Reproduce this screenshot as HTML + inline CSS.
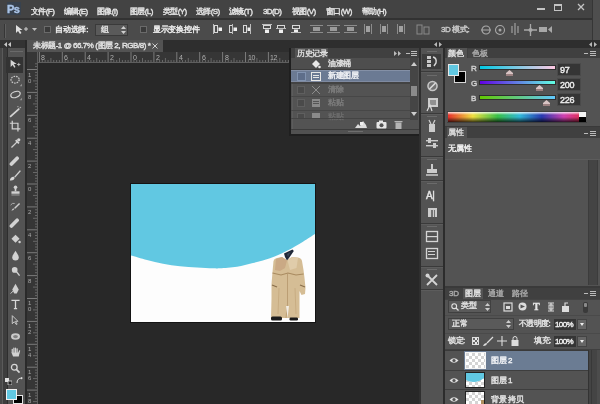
<!DOCTYPE html>
<html><head><meta charset="utf-8">
<style>
*{margin:0;padding:0;box-sizing:border-box}
html,body{-webkit-font-smoothing:antialiased;width:600px;height:404px;overflow:hidden;background:#282828;font-family:"Liberation Sans",sans-serif;color:#d6d6d6;position:relative}
.a{position:absolute}
.t{position:absolute;white-space:nowrap;-webkit-text-stroke:0.4px currentColor}
</style></head><body><div id="w" style="position:absolute;left:0;top:0;width:600px;height:404px;overflow:hidden;will-change:transform">
<div class="a" style="left:0px;top:0px;width:600px;height:19px;background:#434343;"></div>
<div class="a" style="left:7px;top:2px;width:14px;height:13px;background:#38424e;"></div>
<div class="t" style="left:7px;top:3px;font-size:11px;line-height:13px;color:#a9c3e6;font-weight:bold;line-height:12px;letter-spacing:-0.6px">Ps</div>
<div class="t" style="left:31px;top:7px;font-size:8px;line-height:10px;color:#e2e2e2;letter-spacing:-0.6px">文件(F)</div>
<div class="t" style="left:64px;top:7px;font-size:8px;line-height:10px;color:#e2e2e2;letter-spacing:-0.6px">编辑(E)</div>
<div class="t" style="left:97px;top:7px;font-size:8px;line-height:10px;color:#e2e2e2;letter-spacing:-0.6px">图像(I)</div>
<div class="t" style="left:130px;top:7px;font-size:8px;line-height:10px;color:#e2e2e2;letter-spacing:-0.6px">图层(L)</div>
<div class="t" style="left:163px;top:7px;font-size:8px;line-height:10px;color:#e2e2e2;letter-spacing:-0.6px">类型(Y)</div>
<div class="t" style="left:196px;top:7px;font-size:8px;line-height:10px;color:#e2e2e2;letter-spacing:-0.6px">选择(S)</div>
<div class="t" style="left:229px;top:7px;font-size:8px;line-height:10px;color:#e2e2e2;letter-spacing:-0.6px">滤镜(T)</div>
<div class="t" style="left:263px;top:7px;font-size:8px;line-height:10px;color:#e2e2e2;letter-spacing:-0.6px">3D(D)</div>
<div class="t" style="left:292px;top:7px;font-size:8px;line-height:10px;color:#e2e2e2;letter-spacing:-0.6px">视图(V)</div>
<div class="t" style="left:326px;top:7px;font-size:8px;line-height:10px;color:#e2e2e2;letter-spacing:-0.6px">窗口(W)</div>
<div class="t" style="left:362px;top:7px;font-size:8px;line-height:10px;color:#e2e2e2;letter-spacing:-0.6px">帮助(H)</div>
<div class="a" style="left:537px;top:8px;width:8px;height:2px;background:#c4c4c4;"></div>
<div class="a" style="left:554px;top:4px;width:8px;height:7px;border:1px solid #c4c4c4;border-top-width:2px"></div>
<svg class="a" style="left:577px;top:3px;" width="8" height="8" viewBox="0 0 8 8"><path d="M1 1L7 7M7 1L1 7" stroke="#c4c4c4" stroke-width="1.3"/></svg>
<div class="a" style="left:0px;top:18px;width:600px;height:2px;background:#323232;"></div>
<div class="a" style="left:0px;top:20px;width:600px;height:20px;background:#4b4b4b;"></div>
<div class="a" style="left:4px;top:24px;width:1px;height:14px;background:#363636;"></div>
<div class="a" style="left:5px;top:24px;width:1px;height:14px;background:#5e5e5e;"></div>
<svg class="a" style="left:15px;top:24px;" width="14" height="11" viewBox="0 0 14 11"><path d="M1 1L1 9L3 7L5 10L6.5 9L4.5 6L7.5 6Z" fill="#e0e0e0"/><path d="M9 5L13 5M11 3L11 7" stroke="#cfcfcf" stroke-width="1"/></svg>
<svg class="a" style="left:32px;top:28px;" width="5" height="3" viewBox="0 0 5 3"><path d="M0 0L5 0L2.5 3Z" fill="#bdbdbd"/></svg>
<div class="a" style="left:44px;top:26px;width:7px;height:7px;background:#3a3a3a;border:1px solid #6a6a6a"></div>
<div class="t" style="left:55px;top:25px;font-size:8px;line-height:10px;color:#eeeeee;letter-spacing:-0.2px">自动选择:</div>
<div class="a" style="left:95px;top:24px;width:33px;height:12px;background:#5a5a5a;border:1px solid #3a3a3a"></div>
<div class="t" style="left:101px;top:25px;font-size:8px;line-height:10px;color:#e0e0e0;">组</div>
<svg class="a" style="left:121px;top:26px;" width="5" height="8" viewBox="0 0 5 8"><path d="M0 3L2.5 0L5 3ZM0 5L5 5L2.5 8Z" fill="#cfcfcf"/></svg>
<div class="a" style="left:140px;top:26px;width:7px;height:7px;background:#3a3a3a;border:1px solid #6a6a6a"></div>
<div class="t" style="left:153px;top:25px;font-size:8px;line-height:10px;color:#eeeeee;letter-spacing:-0.3px">显示变换控件</div>
<svg class="a" style="left:213px;top:24px;" width="10" height="10" viewBox="0 0 10 10"><rect x="1.5" y="1.5" width="3" height="7" fill="none" stroke="#d8d8d8" stroke-width="1"/><rect x="5.5" y="3.5" width="3.5" height="3.5" fill="#f0f0f0"/><rect x="0.0" y="0" width="1" height="10" fill="#bdbdbd"/></svg>
<svg class="a" style="left:228px;top:24px;" width="10" height="10" viewBox="0 0 10 10"><rect x="1.5" y="1.5" width="3" height="7" fill="none" stroke="#d8d8d8" stroke-width="1"/><rect x="5.5" y="3.5" width="3.5" height="3.5" fill="#f0f0f0"/><rect x="4.0" y="0" width="1" height="10" fill="#bdbdbd"/></svg>
<svg class="a" style="left:242px;top:24px;" width="10" height="10" viewBox="0 0 10 10"><rect x="1.5" y="1.5" width="3" height="7" fill="none" stroke="#d8d8d8" stroke-width="1"/><rect x="5.5" y="3.5" width="3.5" height="3.5" fill="#f0f0f0"/><rect x="8.0" y="0" width="1" height="10" fill="#bdbdbd"/></svg>
<svg class="a" style="left:262px;top:24px;" width="10" height="10" viewBox="0 0 10 10"><rect x="1.5" y="1.5" width="7" height="3" fill="none" stroke="#d8d8d8" stroke-width="1"/><rect x="3" y="5.5" width="4" height="3.5" fill="#f0f0f0"/><rect x="0" y="0.0" width="10" height="1" fill="#bdbdbd"/></svg>
<svg class="a" style="left:276px;top:24px;" width="10" height="10" viewBox="0 0 10 10"><rect x="1.5" y="1.5" width="7" height="3" fill="none" stroke="#d8d8d8" stroke-width="1"/><rect x="3" y="5.5" width="4" height="3.5" fill="#f0f0f0"/><rect x="0" y="4.0" width="10" height="1" fill="#bdbdbd"/></svg>
<svg class="a" style="left:291px;top:24px;" width="10" height="10" viewBox="0 0 10 10"><rect x="1.5" y="1.5" width="7" height="3" fill="none" stroke="#d8d8d8" stroke-width="1"/><rect x="3" y="5.5" width="4" height="3.5" fill="#f0f0f0"/><rect x="0" y="8.0" width="10" height="1" fill="#bdbdbd"/></svg>
<svg class="a" style="left:310px;top:24px;" width="13" height="10" viewBox="0 0 13 10"><rect x="0" y="1" width="13" height="1" fill="#8c8c8c"/><rect x="0" y="8" width="13" height="1" fill="#8c8c8c"/><rect x="3" y="3" width="7" height="4" fill="#9a9a9a"/></svg>
<svg class="a" style="left:327px;top:24px;" width="13" height="10" viewBox="0 0 13 10"><rect x="0" y="1" width="13" height="1" fill="#8c8c8c"/><rect x="0" y="8" width="13" height="1" fill="#8c8c8c"/><rect x="3" y="3" width="7" height="4" fill="#9a9a9a"/></svg>
<svg class="a" style="left:344px;top:24px;" width="13" height="10" viewBox="0 0 13 10"><rect x="0" y="1" width="13" height="1" fill="#8c8c8c"/><rect x="0" y="8" width="13" height="1" fill="#8c8c8c"/><rect x="3" y="3" width="7" height="4" fill="#9a9a9a"/></svg>
<svg class="a" style="left:363px;top:23px;" width="10" height="12" viewBox="0 0 10 12"><rect x="1" y="1" width="1" height="10" fill="#8c8c8c"/><rect x="8" y="1" width="1" height="10" fill="#8c8c8c"/><rect x="3" y="3" width="4" height="6" fill="#a0a0a0"/></svg>
<svg class="a" style="left:379px;top:23px;" width="10" height="12" viewBox="0 0 10 12"><rect x="1" y="1" width="1" height="10" fill="#8c8c8c"/><rect x="8" y="1" width="1" height="10" fill="#8c8c8c"/><rect x="3" y="3" width="4" height="6" fill="#a0a0a0"/></svg>
<svg class="a" style="left:396px;top:23px;" width="10" height="12" viewBox="0 0 10 12"><rect x="1" y="1" width="1" height="10" fill="#8c8c8c"/><rect x="8" y="1" width="1" height="10" fill="#8c8c8c"/><rect x="3" y="3" width="4" height="6" fill="#a0a0a0"/></svg>
<svg class="a" style="left:416px;top:24px;" width="14" height="11" viewBox="0 0 14 11"><rect x="1" y="1" width="5" height="9" fill="none" stroke="#8a8a8a"/><rect x="8" y="3" width="5" height="7" fill="none" stroke="#8a8a8a"/></svg>
<div class="t" style="left:441px;top:25px;font-size:8px;line-height:10px;color:#c8c8c8;letter-spacing:-0.4px">3D 模式:</div>
<svg class="a" style="left:480px;top:24px;" width="13" height="11" viewBox="0 0 13 11"><circle cx="6" cy="6" r="4" fill="none" stroke="#a8a8a8" stroke-width="1.2"/><path d="M1 6L11 6" stroke="#a8a8a8"/></svg>
<svg class="a" style="left:494px;top:24px;" width="12" height="12" viewBox="0 0 12 12"><circle cx="6" cy="6" r="4.5" fill="none" stroke="#a8a8a8" stroke-width="1.1"/><circle cx="6" cy="6" r="1.5" fill="#a8a8a8"/></svg>
<svg class="a" style="left:509px;top:23px;" width="12" height="13" viewBox="0 0 12 13"><path d="M6 0L6 12M3 3L3 10M9 3L9 10" stroke="#a8a8a8" stroke-width="1.1"/></svg>
<svg class="a" style="left:524px;top:24px;" width="13" height="12" viewBox="0 0 13 12"><path d="M6.5 0L6.5 12M0 6L13 6" stroke="#a8a8a8" stroke-width="1.3"/><circle cx="6.5" cy="6" r="2" fill="#a8a8a8"/></svg>
<svg class="a" style="left:539px;top:25px;" width="14" height="9" viewBox="0 0 14 9"><rect x="0" y="2" width="8" height="5" fill="#a8a8a8"/><path d="M9 4.5L13 1L13 8Z" fill="#a8a8a8"/></svg>
<div class="a" style="left:592px;top:0px;width:1px;height:40px;background:#363636;"></div>
<div class="a" style="left:593px;top:0px;width:7px;height:40px;background:#4e4e4e;"></div>
<div class="a" style="left:0px;top:40px;width:600px;height:12px;background:#2e2e2e;"></div>
<div class="a" style="left:0px;top:40px;width:26px;height:364px;background:#474747;"></div>
<div class="a" style="left:0px;top:40px;width:26px;height:8px;background:#333333;"></div>
<svg class="a" style="left:4px;top:42px;" width="7" height="5" viewBox="0 0 7 5"><path d="M3 0L0 2.5L3 5ZM7 0L4 2.5L7 5Z" fill="#c8c8c8"/></svg>
<div class="a" style="left:2px;top:48px;width:1px;height:356px;background:#5a5a5a;"></div>
<div class="a" style="left:3px;top:48px;width:4px;height:356px;background:#3d3d3d;"></div>
<div class="a" style="left:7px;top:48px;width:1px;height:356px;background:#2e2e2e;"></div>
<div class="a" style="left:8px;top:48px;width:17px;height:356px;background:#535353;"></div>
<div class="a" style="left:25px;top:40px;width:2px;height:364px;background:#2a2a2a;"></div>
<div class="a" style="left:10px;top:51px;width:13px;height:1px;background:#6a6a6a;"></div>
<div class="a" style="left:6px;top:57px;width:17px;height:16px;background:#333333;"></div>
<svg class="a" style="left:9px;top:58px;opacity:0.9" width="13" height="13" viewBox="0 0 16 16"><path d="M2 2L2 11L4.5 8.5L6.5 12L8 11L6 7.5L9.5 7.5Z" fill="#e6e6e6"/><path d="M10 8L14 8M12 6L12 10" stroke="#ddd" stroke-width="1"/></svg>
<svg class="a" style="left:9px;top:74px;opacity:0.9" width="13" height="13" viewBox="0 0 16 16"><ellipse cx="7.5" cy="7" rx="5" ry="4.2" fill="none" stroke="#d4d4d4" stroke-width="1.5" stroke-dasharray="2 1.2"/><path d="M13 15L16 12L16 15Z" fill="#999"/></svg>
<svg class="a" style="left:9px;top:88px;opacity:0.9" width="13" height="13" viewBox="0 0 16 16"><ellipse cx="8" cy="8" rx="6" ry="3.6" transform="rotate(-20 8 8)" fill="none" stroke="#e0e0e0" stroke-width="1.6"/><path d="M13 15L16 12L16 15Z" fill="#999"/></svg>
<svg class="a" style="left:9px;top:105px;opacity:0.9" width="13" height="13" viewBox="0 0 16 16"><path d="M2 14L12 5" stroke="#e0e0e0" stroke-width="2.2" stroke-linecap="round"/><circle cx="14" cy="3" r="1" fill="#bbb"/><circle cx="11" cy="2" r="0.8" fill="#bbb"/></svg>
<svg class="a" style="left:9px;top:120px;opacity:0.9" width="13" height="13" viewBox="0 0 16 16"><path d="M4 1L4 11L14 11M1 4L11 4L11 14" fill="none" stroke="#e0e0e0" stroke-width="1.5"/></svg>
<svg class="a" style="left:9px;top:137px;opacity:0.9" width="13" height="13" viewBox="0 0 16 16"><path d="M3 13L10 6" stroke="#dcdcdc" stroke-width="1.6"/><path d="M9 3L13 7L11.5 8.5L7.5 4.5Z" fill="#e2e2e2"/><circle cx="12" cy="3.5" r="2" fill="#e2e2e2"/></svg>
<svg class="a" style="left:9px;top:155px;opacity:0.9" width="13" height="13" viewBox="0 0 16 16"><path d="M3 11L10 4" stroke="#e0e0e0" stroke-width="4.5" stroke-linecap="round"/></svg>
<svg class="a" style="left:9px;top:169px;opacity:0.9" width="13" height="13" viewBox="0 0 16 16"><path d="M14 2L7 10" stroke="#e0e0e0" stroke-width="1.8"/><path d="M1 14Q2 9 6 9.5Q8 11 6 13Q4 14.5 1 14Z" fill="#e6e6e6"/></svg>
<svg class="a" style="left:9px;top:184px;opacity:0.9" width="13" height="13" viewBox="0 0 16 16"><circle cx="8" cy="4" r="2.2" fill="#e0e0e0"/><rect x="7" y="5" width="2" height="4" fill="#e0e0e0"/><rect x="3" y="9" width="10" height="3" fill="#e0e0e0"/><rect x="3" y="13" width="10" height="1" fill="#bbb"/></svg>
<svg class="a" style="left:9px;top:201px;opacity:0.9" width="13" height="13" viewBox="0 0 16 16"><path d="M13 3L7 9" stroke="#dcdcdc" stroke-width="1.8"/><path d="M3 12Q4 9 7 9Q6 12 3 12Z" fill="#e0e0e0"/><path d="M2 5Q4 2 7 3" stroke="#ccc" fill="none"/></svg>
<svg class="a" style="left:9px;top:217px;opacity:0.9" width="13" height="13" viewBox="0 0 16 16"><path d="M3 11L10 4" stroke="#e0e0e0" stroke-width="4.5" stroke-linecap="round"/></svg>
<svg class="a" style="left:9px;top:233px;opacity:0.9" width="13" height="13" viewBox="0 0 16 16"><path d="M3 7L8 2L13 7L8 12Z" fill="#dedede"/><circle cx="13" cy="11" r="1.5" fill="#dedede"/></svg>
<svg class="a" style="left:9px;top:249px;opacity:0.9" width="13" height="13" viewBox="0 0 16 16"><path d="M8 2Q12 8 12 10A4 4 0 0 1 4 10Q4 8 8 2Z" fill="#e0e0e0"/></svg>
<svg class="a" style="left:9px;top:265px;opacity:0.9" width="13" height="13" viewBox="0 0 16 16"><circle cx="7" cy="6" r="3.5" fill="#e0e0e0"/><path d="M9 8L13 13" stroke="#e0e0e0" stroke-width="1.6"/></svg>
<svg class="a" style="left:9px;top:283px;opacity:0.9" width="13" height="13" viewBox="0 0 16 16"><path d="M8 1L12 8L9.5 13L6.5 13L4 8Z" fill="#dedede"/><path d="M2 13L6 9" stroke="#dedede" stroke-width="1.2"/></svg>
<svg class="a" style="left:9px;top:298px;opacity:0.9" width="13" height="13" viewBox="0 0 16 16"><path d="M3 3L13 3M8 3L8 13M6 13L10 13" stroke="#e8e8e8" stroke-width="1.6"/></svg>
<svg class="a" style="left:9px;top:314px;opacity:0.9" width="13" height="13" viewBox="0 0 16 16"><path d="M4 2L4 12L6.5 9.5L9 13L10 12.5L8 9L11 9Z" fill="none" stroke="#e0e0e0" stroke-width="1.1"/></svg>
<svg class="a" style="left:9px;top:330px;opacity:0.9" width="13" height="13" viewBox="0 0 16 16"><ellipse cx="8" cy="8" rx="5.5" ry="4" fill="#d8d8d8"/><ellipse cx="8" cy="8" rx="3" ry="2" fill="#888"/></svg>
<svg class="a" style="left:9px;top:346px;opacity:0.9" width="13" height="13" viewBox="0 0 16 16"><path d="M4 8L4 4M6 8L6 2.5M8 8L8 2.5M10 8L10 3.5M12 9L13 6" stroke="#e0e0e0" stroke-width="1.5" stroke-linecap="round"/><path d="M3 8L13 8L12 13L5 13Z" fill="#e0e0e0"/></svg>
<svg class="a" style="left:9px;top:362px;opacity:0.9" width="13" height="13" viewBox="0 0 16 16"><circle cx="6.5" cy="6.5" r="3.5" fill="none" stroke="#e6e6e6" stroke-width="1.6"/><path d="M9 9L13 13" stroke="#e6e6e6" stroke-width="2"/></svg>
<svg class="a" style="left:5px;top:378px;" width="7" height="7" viewBox="0 0 7 7"><rect x="0" y="0" width="4" height="4" fill="#e0e0e0"/><rect x="3" y="3" width="4" height="4" fill="#222" stroke="#ddd" stroke-width="0.8"/></svg>
<svg class="a" style="left:16px;top:377px;" width="7" height="7" viewBox="0 0 7 7"><path d="M1 6Q1 1 6 1" stroke="#ddd" fill="none"/><path d="M5 0L7 1L5 2.5Z" fill="#ddd"/></svg>
<div class="a" style="left:13px;top:395px;width:10px;height:9px;background:#000;border:1px solid #e8e8e8"></div>
<div class="a" style="left:6px;top:389px;width:11px;height:11px;background:#61c8e2;border:1px solid #f2f2f2"></div>
<div class="a" style="left:27px;top:40px;width:136px;height:12px;background:#535353;"></div>
<div class="t" style="left:33px;top:41px;font-size:8px;line-height:10px;color:#e0e0e0;letter-spacing:-0.45px">未标题-1 @ 66.7% (图层 2, RGB/8) *</div>
<svg class="a" style="left:152px;top:43px;" width="6" height="6" viewBox="0 0 6 6"><path d="M0.5 0.5L5.5 5.5M5.5 0.5L0.5 5.5" stroke="#cfcfcf" stroke-width="1"/></svg>
<div class="a" style="left:27px;top:52px;width:265px;height:11px;background:#363636;"></div>
<div class="a" style="left:27px;top:62px;width:265px;height:1px;background:#5e5e5e;"></div>
<div class="a" style="left:37px;top:52px;width:1px;height:352px;background:#5e5e5e;"></div>
<div class="a" style="left:27px;top:52px;width:10px;height:352px;background:#363636;"></div>
<svg class="a" style="left:38px;top:52px;" width="254" height="10" viewBox="0 0 254 10"><rect x="-22.0" y="0" width="1" height="10" fill="#7a7a7a"/><rect x="-19.1" y="8" width="1" height="2" fill="#686868"/><rect x="-16.3" y="8" width="1" height="2" fill="#686868"/><rect x="-13.4" y="8" width="1" height="2" fill="#686868"/><rect x="-10.6" y="6" width="1" height="4" fill="#686868"/><rect x="-7.7" y="8" width="1" height="2" fill="#686868"/><rect x="-4.8" y="8" width="1" height="2" fill="#686868"/><rect x="-2.0" y="8" width="1" height="2" fill="#686868"/><rect x="0.9" y="0" width="1" height="10" fill="#7a7a7a"/><rect x="3.8" y="8" width="1" height="2" fill="#686868"/><rect x="6.6" y="8" width="1" height="2" fill="#686868"/><rect x="9.5" y="8" width="1" height="2" fill="#686868"/><rect x="12.4" y="6" width="1" height="4" fill="#686868"/><rect x="15.2" y="8" width="1" height="2" fill="#686868"/><rect x="18.1" y="8" width="1" height="2" fill="#686868"/><rect x="20.9" y="8" width="1" height="2" fill="#686868"/><rect x="23.8" y="0" width="1" height="10" fill="#7a7a7a"/><rect x="26.7" y="8" width="1" height="2" fill="#686868"/><rect x="29.5" y="8" width="1" height="2" fill="#686868"/><rect x="32.4" y="8" width="1" height="2" fill="#686868"/><rect x="35.3" y="6" width="1" height="4" fill="#686868"/><rect x="38.1" y="8" width="1" height="2" fill="#686868"/><rect x="41.0" y="8" width="1" height="2" fill="#686868"/><rect x="43.8" y="8" width="1" height="2" fill="#686868"/><rect x="46.7" y="0" width="1" height="10" fill="#7a7a7a"/><rect x="49.6" y="8" width="1" height="2" fill="#686868"/><rect x="52.4" y="8" width="1" height="2" fill="#686868"/><rect x="55.3" y="8" width="1" height="2" fill="#686868"/><rect x="58.2" y="6" width="1" height="4" fill="#686868"/><rect x="61.0" y="8" width="1" height="2" fill="#686868"/><rect x="63.9" y="8" width="1" height="2" fill="#686868"/><rect x="66.7" y="8" width="1" height="2" fill="#686868"/><rect x="69.6" y="0" width="1" height="10" fill="#7a7a7a"/><rect x="72.5" y="8" width="1" height="2" fill="#686868"/><rect x="75.3" y="8" width="1" height="2" fill="#686868"/><rect x="78.2" y="8" width="1" height="2" fill="#686868"/><rect x="81.0" y="6" width="1" height="4" fill="#686868"/><rect x="83.9" y="8" width="1" height="2" fill="#686868"/><rect x="86.8" y="8" width="1" height="2" fill="#686868"/><rect x="89.6" y="8" width="1" height="2" fill="#686868"/><rect x="92.5" y="0" width="1" height="10" fill="#7a7a7a"/><rect x="95.4" y="8" width="1" height="2" fill="#686868"/><rect x="98.2" y="8" width="1" height="2" fill="#686868"/><rect x="101.1" y="8" width="1" height="2" fill="#686868"/><rect x="104.0" y="6" width="1" height="4" fill="#686868"/><rect x="106.8" y="8" width="1" height="2" fill="#686868"/><rect x="109.7" y="8" width="1" height="2" fill="#686868"/><rect x="112.5" y="8" width="1" height="2" fill="#686868"/><rect x="115.4" y="0" width="1" height="10" fill="#7a7a7a"/><rect x="118.3" y="8" width="1" height="2" fill="#686868"/><rect x="121.1" y="8" width="1" height="2" fill="#686868"/><rect x="124.0" y="8" width="1" height="2" fill="#686868"/><rect x="126.9" y="6" width="1" height="4" fill="#686868"/><rect x="129.7" y="8" width="1" height="2" fill="#686868"/><rect x="132.6" y="8" width="1" height="2" fill="#686868"/><rect x="135.4" y="8" width="1" height="2" fill="#686868"/><rect x="138.3" y="0" width="1" height="10" fill="#7a7a7a"/><rect x="141.2" y="8" width="1" height="2" fill="#686868"/><rect x="144.0" y="8" width="1" height="2" fill="#686868"/><rect x="146.9" y="8" width="1" height="2" fill="#686868"/><rect x="149.8" y="6" width="1" height="4" fill="#686868"/><rect x="152.6" y="8" width="1" height="2" fill="#686868"/><rect x="155.5" y="8" width="1" height="2" fill="#686868"/><rect x="158.3" y="8" width="1" height="2" fill="#686868"/><rect x="161.2" y="0" width="1" height="10" fill="#7a7a7a"/><rect x="164.1" y="8" width="1" height="2" fill="#686868"/><rect x="166.9" y="8" width="1" height="2" fill="#686868"/><rect x="169.8" y="8" width="1" height="2" fill="#686868"/><rect x="172.6" y="6" width="1" height="4" fill="#686868"/><rect x="175.5" y="8" width="1" height="2" fill="#686868"/><rect x="178.4" y="8" width="1" height="2" fill="#686868"/><rect x="181.2" y="8" width="1" height="2" fill="#686868"/><rect x="184.1" y="0" width="1" height="10" fill="#7a7a7a"/><rect x="187.0" y="8" width="1" height="2" fill="#686868"/><rect x="189.8" y="8" width="1" height="2" fill="#686868"/><rect x="192.7" y="8" width="1" height="2" fill="#686868"/><rect x="195.5" y="6" width="1" height="4" fill="#686868"/><rect x="198.4" y="8" width="1" height="2" fill="#686868"/><rect x="201.3" y="8" width="1" height="2" fill="#686868"/><rect x="204.1" y="8" width="1" height="2" fill="#686868"/><rect x="207.0" y="0" width="1" height="10" fill="#7a7a7a"/><rect x="209.9" y="8" width="1" height="2" fill="#686868"/><rect x="212.7" y="8" width="1" height="2" fill="#686868"/><rect x="215.6" y="8" width="1" height="2" fill="#686868"/><rect x="218.4" y="6" width="1" height="4" fill="#686868"/><rect x="221.3" y="8" width="1" height="2" fill="#686868"/><rect x="224.2" y="8" width="1" height="2" fill="#686868"/><rect x="227.0" y="8" width="1" height="2" fill="#686868"/><rect x="229.9" y="0" width="1" height="10" fill="#7a7a7a"/><rect x="232.8" y="8" width="1" height="2" fill="#686868"/><rect x="235.6" y="8" width="1" height="2" fill="#686868"/><rect x="238.5" y="8" width="1" height="2" fill="#686868"/><rect x="241.3" y="6" width="1" height="4" fill="#686868"/><rect x="244.2" y="8" width="1" height="2" fill="#686868"/><rect x="247.1" y="8" width="1" height="2" fill="#686868"/><rect x="249.9" y="8" width="1" height="2" fill="#686868"/><rect x="252.8" y="0" width="1" height="10" fill="#7a7a7a"/><rect x="255.7" y="8" width="1" height="2" fill="#686868"/><rect x="258.5" y="8" width="1" height="2" fill="#686868"/><rect x="261.4" y="8" width="1" height="2" fill="#686868"/><rect x="264.2" y="6" width="1" height="4" fill="#686868"/><rect x="267.1" y="8" width="1" height="2" fill="#686868"/><rect x="270.0" y="8" width="1" height="2" fill="#686868"/><rect x="272.8" y="8" width="1" height="2" fill="#686868"/></svg>
<div class="t" style="left:41px;top:53px;font-size:7px;line-height:9px;color:#b0b0b0;letter-spacing:-0.3px;-webkit-text-stroke:0">8</div>
<div class="t" style="left:64px;top:53px;font-size:7px;line-height:9px;color:#b0b0b0;letter-spacing:-0.3px;-webkit-text-stroke:0">6</div>
<div class="t" style="left:87px;top:53px;font-size:7px;line-height:9px;color:#b0b0b0;letter-spacing:-0.3px;-webkit-text-stroke:0">4</div>
<div class="t" style="left:110px;top:53px;font-size:7px;line-height:9px;color:#b0b0b0;letter-spacing:-0.3px;-webkit-text-stroke:0">2</div>
<div class="t" style="left:133px;top:53px;font-size:7px;line-height:9px;color:#b0b0b0;letter-spacing:-0.3px;-webkit-text-stroke:0">0</div>
<div class="t" style="left:156px;top:53px;font-size:7px;line-height:9px;color:#b0b0b0;letter-spacing:-0.3px;-webkit-text-stroke:0">2</div>
<div class="t" style="left:179px;top:53px;font-size:7px;line-height:9px;color:#b0b0b0;letter-spacing:-0.3px;-webkit-text-stroke:0">4</div>
<div class="t" style="left:202px;top:53px;font-size:7px;line-height:9px;color:#b0b0b0;letter-spacing:-0.3px;-webkit-text-stroke:0">6</div>
<div class="t" style="left:225px;top:53px;font-size:7px;line-height:9px;color:#b0b0b0;letter-spacing:-0.3px;-webkit-text-stroke:0">8</div>
<div class="t" style="left:248px;top:53px;font-size:7px;line-height:9px;color:#b0b0b0;letter-spacing:-0.3px;-webkit-text-stroke:0">10</div>
<div class="t" style="left:270px;top:53px;font-size:7px;line-height:9px;color:#b0b0b0;letter-spacing:-0.3px;-webkit-text-stroke:0">12</div>
<div class="t" style="left:293px;top:53px;font-size:7px;line-height:9px;color:#b0b0b0;letter-spacing:-0.3px;-webkit-text-stroke:0">14</div>
<svg class="a" style="left:27px;top:63px;" width="10" height="341" viewBox="0 0 10 341"><rect x="0" y="-16.9" width="10" height="1" fill="#7a7a7a"/><rect x="8" y="-14.0" width="2" height="1" fill="#686868"/><rect x="8" y="-11.2" width="2" height="1" fill="#686868"/><rect x="8" y="-8.3" width="2" height="1" fill="#686868"/><rect x="6" y="-5.4" width="4" height="1" fill="#686868"/><rect x="8" y="-2.6" width="2" height="1" fill="#686868"/><rect x="8" y="0.3" width="2" height="1" fill="#686868"/><rect x="8" y="3.1" width="2" height="1" fill="#686868"/><rect x="0" y="6.0" width="10" height="1" fill="#7a7a7a"/><rect x="8" y="8.9" width="2" height="1" fill="#686868"/><rect x="8" y="11.7" width="2" height="1" fill="#686868"/><rect x="8" y="14.6" width="2" height="1" fill="#686868"/><rect x="6" y="17.4" width="4" height="1" fill="#686868"/><rect x="8" y="20.3" width="2" height="1" fill="#686868"/><rect x="8" y="23.2" width="2" height="1" fill="#686868"/><rect x="8" y="26.0" width="2" height="1" fill="#686868"/><rect x="0" y="28.9" width="10" height="1" fill="#7a7a7a"/><rect x="8" y="31.8" width="2" height="1" fill="#686868"/><rect x="8" y="34.6" width="2" height="1" fill="#686868"/><rect x="8" y="37.5" width="2" height="1" fill="#686868"/><rect x="6" y="40.4" width="4" height="1" fill="#686868"/><rect x="8" y="43.2" width="2" height="1" fill="#686868"/><rect x="8" y="46.1" width="2" height="1" fill="#686868"/><rect x="8" y="48.9" width="2" height="1" fill="#686868"/><rect x="0" y="51.8" width="10" height="1" fill="#7a7a7a"/><rect x="8" y="54.7" width="2" height="1" fill="#686868"/><rect x="8" y="57.5" width="2" height="1" fill="#686868"/><rect x="8" y="60.4" width="2" height="1" fill="#686868"/><rect x="6" y="63.3" width="4" height="1" fill="#686868"/><rect x="8" y="66.1" width="2" height="1" fill="#686868"/><rect x="8" y="69.0" width="2" height="1" fill="#686868"/><rect x="8" y="71.8" width="2" height="1" fill="#686868"/><rect x="0" y="74.7" width="10" height="1" fill="#7a7a7a"/><rect x="8" y="77.6" width="2" height="1" fill="#686868"/><rect x="8" y="80.4" width="2" height="1" fill="#686868"/><rect x="8" y="83.3" width="2" height="1" fill="#686868"/><rect x="6" y="86.1" width="4" height="1" fill="#686868"/><rect x="8" y="89.0" width="2" height="1" fill="#686868"/><rect x="8" y="91.9" width="2" height="1" fill="#686868"/><rect x="8" y="94.7" width="2" height="1" fill="#686868"/><rect x="0" y="97.6" width="10" height="1" fill="#7a7a7a"/><rect x="8" y="100.5" width="2" height="1" fill="#686868"/><rect x="8" y="103.3" width="2" height="1" fill="#686868"/><rect x="8" y="106.2" width="2" height="1" fill="#686868"/><rect x="6" y="109.0" width="4" height="1" fill="#686868"/><rect x="8" y="111.9" width="2" height="1" fill="#686868"/><rect x="8" y="114.8" width="2" height="1" fill="#686868"/><rect x="8" y="117.6" width="2" height="1" fill="#686868"/><rect x="0" y="120.5" width="10" height="1" fill="#7a7a7a"/><rect x="8" y="123.4" width="2" height="1" fill="#686868"/><rect x="8" y="126.2" width="2" height="1" fill="#686868"/><rect x="8" y="129.1" width="2" height="1" fill="#686868"/><rect x="6" y="131.9" width="4" height="1" fill="#686868"/><rect x="8" y="134.8" width="2" height="1" fill="#686868"/><rect x="8" y="137.7" width="2" height="1" fill="#686868"/><rect x="8" y="140.5" width="2" height="1" fill="#686868"/><rect x="0" y="143.4" width="10" height="1" fill="#7a7a7a"/><rect x="8" y="146.3" width="2" height="1" fill="#686868"/><rect x="8" y="149.1" width="2" height="1" fill="#686868"/><rect x="8" y="152.0" width="2" height="1" fill="#686868"/><rect x="6" y="154.8" width="4" height="1" fill="#686868"/><rect x="8" y="157.7" width="2" height="1" fill="#686868"/><rect x="8" y="160.6" width="2" height="1" fill="#686868"/><rect x="8" y="163.4" width="2" height="1" fill="#686868"/><rect x="0" y="166.3" width="10" height="1" fill="#7a7a7a"/><rect x="8" y="169.2" width="2" height="1" fill="#686868"/><rect x="8" y="172.0" width="2" height="1" fill="#686868"/><rect x="8" y="174.9" width="2" height="1" fill="#686868"/><rect x="6" y="177.8" width="4" height="1" fill="#686868"/><rect x="8" y="180.6" width="2" height="1" fill="#686868"/><rect x="8" y="183.5" width="2" height="1" fill="#686868"/><rect x="8" y="186.3" width="2" height="1" fill="#686868"/><rect x="0" y="189.2" width="10" height="1" fill="#7a7a7a"/><rect x="8" y="192.1" width="2" height="1" fill="#686868"/><rect x="8" y="194.9" width="2" height="1" fill="#686868"/><rect x="8" y="197.8" width="2" height="1" fill="#686868"/><rect x="6" y="200.6" width="4" height="1" fill="#686868"/><rect x="8" y="203.5" width="2" height="1" fill="#686868"/><rect x="8" y="206.4" width="2" height="1" fill="#686868"/><rect x="8" y="209.2" width="2" height="1" fill="#686868"/><rect x="0" y="212.1" width="10" height="1" fill="#7a7a7a"/><rect x="8" y="215.0" width="2" height="1" fill="#686868"/><rect x="8" y="217.8" width="2" height="1" fill="#686868"/><rect x="8" y="220.7" width="2" height="1" fill="#686868"/><rect x="6" y="223.6" width="4" height="1" fill="#686868"/><rect x="8" y="226.4" width="2" height="1" fill="#686868"/><rect x="8" y="229.3" width="2" height="1" fill="#686868"/><rect x="8" y="232.1" width="2" height="1" fill="#686868"/><rect x="0" y="235.0" width="10" height="1" fill="#7a7a7a"/><rect x="8" y="237.9" width="2" height="1" fill="#686868"/><rect x="8" y="240.7" width="2" height="1" fill="#686868"/><rect x="8" y="243.6" width="2" height="1" fill="#686868"/><rect x="6" y="246.4" width="4" height="1" fill="#686868"/><rect x="8" y="249.3" width="2" height="1" fill="#686868"/><rect x="8" y="252.2" width="2" height="1" fill="#686868"/><rect x="8" y="255.0" width="2" height="1" fill="#686868"/><rect x="0" y="257.9" width="10" height="1" fill="#7a7a7a"/><rect x="8" y="260.8" width="2" height="1" fill="#686868"/><rect x="8" y="263.6" width="2" height="1" fill="#686868"/><rect x="8" y="266.5" width="2" height="1" fill="#686868"/><rect x="6" y="269.3" width="4" height="1" fill="#686868"/><rect x="8" y="272.2" width="2" height="1" fill="#686868"/><rect x="8" y="275.1" width="2" height="1" fill="#686868"/><rect x="8" y="277.9" width="2" height="1" fill="#686868"/><rect x="0" y="280.8" width="10" height="1" fill="#7a7a7a"/><rect x="8" y="283.7" width="2" height="1" fill="#686868"/><rect x="8" y="286.5" width="2" height="1" fill="#686868"/><rect x="8" y="289.4" width="2" height="1" fill="#686868"/><rect x="6" y="292.2" width="4" height="1" fill="#686868"/><rect x="8" y="295.1" width="2" height="1" fill="#686868"/><rect x="8" y="298.0" width="2" height="1" fill="#686868"/><rect x="8" y="300.8" width="2" height="1" fill="#686868"/><rect x="0" y="303.7" width="10" height="1" fill="#7a7a7a"/><rect x="8" y="306.6" width="2" height="1" fill="#686868"/><rect x="8" y="309.4" width="2" height="1" fill="#686868"/><rect x="8" y="312.3" width="2" height="1" fill="#686868"/><rect x="6" y="315.1" width="4" height="1" fill="#686868"/><rect x="8" y="318.0" width="2" height="1" fill="#686868"/><rect x="8" y="320.9" width="2" height="1" fill="#686868"/><rect x="8" y="323.7" width="2" height="1" fill="#686868"/><rect x="0" y="326.6" width="10" height="1" fill="#7a7a7a"/><rect x="8" y="329.5" width="2" height="1" fill="#686868"/><rect x="8" y="332.3" width="2" height="1" fill="#686868"/><rect x="8" y="335.2" width="2" height="1" fill="#686868"/><rect x="6" y="338.1" width="4" height="1" fill="#686868"/><rect x="8" y="340.9" width="2" height="1" fill="#686868"/><rect x="8" y="343.8" width="2" height="1" fill="#686868"/><rect x="8" y="346.6" width="2" height="1" fill="#686868"/></svg>
<div class="t" style="left:28px;top:72px;font-size:6px;line-height:8px;color:#a8a8a8;line-height:6px;-webkit-text-stroke:0">1<br>0</div>
<div class="t" style="left:28px;top:94px;font-size:6px;line-height:8px;color:#a8a8a8;line-height:6px;-webkit-text-stroke:0">8</div>
<div class="t" style="left:28px;top:117px;font-size:6px;line-height:8px;color:#a8a8a8;line-height:6px;-webkit-text-stroke:0">6</div>
<div class="t" style="left:28px;top:140px;font-size:6px;line-height:8px;color:#a8a8a8;line-height:6px;-webkit-text-stroke:0">4</div>
<div class="t" style="left:28px;top:163px;font-size:6px;line-height:8px;color:#a8a8a8;line-height:6px;-webkit-text-stroke:0">2</div>
<div class="t" style="left:28px;top:186px;font-size:6px;line-height:8px;color:#a8a8a8;line-height:6px;-webkit-text-stroke:0">0</div>
<div class="t" style="left:28px;top:209px;font-size:6px;line-height:8px;color:#a8a8a8;line-height:6px;-webkit-text-stroke:0">2</div>
<div class="t" style="left:28px;top:232px;font-size:6px;line-height:8px;color:#a8a8a8;line-height:6px;-webkit-text-stroke:0">4</div>
<div class="t" style="left:28px;top:255px;font-size:6px;line-height:8px;color:#a8a8a8;line-height:6px;-webkit-text-stroke:0">6</div>
<div class="t" style="left:28px;top:278px;font-size:6px;line-height:8px;color:#a8a8a8;line-height:6px;-webkit-text-stroke:0">8</div>
<div class="t" style="left:28px;top:300px;font-size:6px;line-height:8px;color:#a8a8a8;line-height:6px;-webkit-text-stroke:0">1<br>0</div>
<div class="t" style="left:28px;top:323px;font-size:6px;line-height:8px;color:#a8a8a8;line-height:6px;-webkit-text-stroke:0">1<br>2</div>
<div class="t" style="left:28px;top:346px;font-size:6px;line-height:8px;color:#a8a8a8;line-height:6px;-webkit-text-stroke:0">1<br>4</div>
<div class="t" style="left:28px;top:369px;font-size:6px;line-height:8px;color:#a8a8a8;line-height:6px;-webkit-text-stroke:0">1<br>6</div>
<div class="t" style="left:28px;top:392px;font-size:6px;line-height:8px;color:#a8a8a8;line-height:6px;-webkit-text-stroke:0">1<br>8</div>
<div class="a" style="left:130px;top:183px;width:186px;height:140px;background:#141414;"></div>
<svg class="a" style="left:131px;top:184px;" width="184" height="138" viewBox="0 0 184 138"><rect x="0" y="0" width="184" height="138" fill="#fdfdfd"/><path d="M0 71.5 C2.7 72.2 10.7 74.6 16 76 C21.3 77.4 26.5 78.7 32 79.7 C37.5 80.7 43.3 81.6 49 82.2 C54.7 82.8 60.5 83.2 66 83.5 C71.5 83.8 78.2 84.2 82 84.3 C85.8 84.4 85.0 84.6 89 84.3 C93.0 84.0 100.5 83.6 106 82.7 C111.5 81.8 116.5 80.4 122 79 C127.5 77.6 133.3 76.3 139 74.3 C144.7 72.3 150.5 69.6 156 66.8 C161.5 64.0 167.3 60.5 172 57.7 C176.7 54.9 182.0 51.3 184 50 L184 0 L0 0 Z" fill="#61c8e2"/></svg>
<svg class="a" style="left:262px;top:244px;" width="54" height="80" viewBox="0 0 54 80"><path d="M11.5 17 Q12 14.5 15 14 L20 13 L25 16 L30 13 L36 13.5 Q39.5 14 40 17 L41.5 26 L42.5 34 L43.5 44 L43 50 L39.5 51 L37.5 47 L37.5 74 L9 74 L9.5 55 L9.5 40 L10.5 28 Z" fill="#d5bd95"/><path d="M22 9.5 L30.5 5.5 L31.8 7 L27 14 L25 16.5 L23 13 Z" fill="#1f2838"/><path d="M25 10 L28.5 8 L26 13 Z" fill="#3c4658"/><path d="M14 15 L20 13 L25 16.5 L23 24 L18 27 L13 26 Z" fill="#caa985"/><path d="M25.5 16.5 L30 13 L36 14 L34.5 24 L28 26 Z" fill="#e0ccaa"/><path d="M10.5 29 L19 31 L26 29 L34 31 L41.5 30" stroke="#a98b60" stroke-width="1.1" fill="none"/><path d="M10 41 L15 43" stroke="#8a6f4c" stroke-width="1.3"/><path d="M38 41 L43 43" stroke="#8a6f4c" stroke-width="1.3"/><path d="M25.5 30 L25.5 60 L24 74" stroke="#b89b70" stroke-width="0.9" fill="none"/><path d="M24 62 L25.5 74 L27 62" fill="#f2ece2"/><path d="M17 44 L16 70" stroke="#c6aa80" stroke-width="0.9"/><path d="M33 44 L34 70" stroke="#c6aa80" stroke-width="0.9"/><rect x="9" y="72.5" width="11" height="4" rx="1.5" fill="#1c1c1c"/><rect x="27.5" y="73.5" width="8.5" height="3" rx="1.2" fill="#1c1c1c"/></svg>
<div class="a" style="left:291px;top:48px;width:128px;height:86px;background:#535353;"></div>
<div class="a" style="left:292px;top:58px;width:1px;height:71px;background:#5c5c5c;"></div>
<div class="a" style="left:291px;top:48px;width:128px;height:10px;background:#404040;"></div>
<div class="a" style="left:295px;top:48px;width:33px;height:10px;background:#535353;"></div>
<div class="t" style="left:297px;top:49px;font-size:8px;line-height:10px;color:#dcdcdc;letter-spacing:-0.3px">历史记录</div>
<svg class="a" style="left:394px;top:51px;" width="7" height="5" viewBox="0 0 7 5"><path d="M0 0L3 2.5L0 5ZM4 0L7 2.5L4 5Z" fill="#bbb"/></svg>
<svg class="a" style="left:406px;top:50px;" width="11" height="7" viewBox="0 0 11 7"><rect x="0" y="3" width="4" height="1" fill="#bbb"/><rect x="5" y="1" width="6" height="1" fill="#bbb"/><rect x="5" y="3" width="6" height="1" fill="#bbb"/><rect x="5" y="5" width="6" height="1" fill="#bbb"/></svg>
<div class="a" style="left:291px;top:58px;width:119px;height:12px;background:#4e4e4e;"></div>
<svg class="a" style="left:311px;top:59px;" width="10" height="10" viewBox="0 0 10 10"><path d="M1 5L5 1L9 5L5 9Z" fill="#e8e8e8"/><circle cx="8.5" cy="8" r="1.3" fill="#e8e8e8"/></svg>
<div class="t" style="left:328px;top:59px;font-size:8px;line-height:10px;color:#e0e0e0;letter-spacing:-0.3px">油漆桶</div>
<div class="a" style="left:291px;top:69px;width:119px;height:1px;background:#3c3c3c;"></div>
<div class="a" style="left:291px;top:70px;width:119px;height:12px;background:#6b7a93;"></div>
<div class="a" style="left:291px;top:70px;width:119px;height:1px;background:#8490a6;"></div>
<div class="a" style="left:291px;top:81px;width:119px;height:1px;background:#7f8aa0;"></div>
<div class="a" style="left:297px;top:72px;width:9px;height:9px;background:#5e6e8a;border:1px solid #8193b0"></div>
<svg class="a" style="left:311px;top:72px;" width="10" height="9" viewBox="0 0 10 9"><rect x="0.5" y="0.5" width="9" height="8" fill="none" stroke="#e6e6e6"/><rect x="2" y="3" width="6" height="1" fill="#e6e6e6"/><rect x="2" y="5" width="6" height="1" fill="#e6e6e6"/></svg>
<div class="t" style="left:328px;top:71px;font-size:8px;line-height:10px;color:#eef0f4;letter-spacing:-0.3px">新建图层</div>
<div class="a" style="left:291px;top:82px;width:119px;height:2px;background:#434343;"></div>
<div class="a" style="left:297px;top:86px;width:8px;height:8px;background:#4a4a4a;border:1px solid #5f5f5f"></div>
<svg class="a" style="left:311px;top:85px;" width="10" height="10" viewBox="0 0 10 10"><path d="M1 1L9 9M9 1L1 9" stroke="#8c8c8c"/></svg>
<div class="t" style="left:328px;top:85px;font-size:8px;line-height:10px;color:#7c7c7c;">清除</div>
<div class="a" style="left:291px;top:96px;width:119px;height:1px;background:#474747;"></div>
<div class="a" style="left:297px;top:99px;width:8px;height:8px;background:#4a4a4a;border:1px solid #5f5f5f"></div>
<svg class="a" style="left:311px;top:98px;" width="10" height="10" viewBox="0 0 10 10"><rect x="1" y="1" width="8" height="8" fill="#8a8a8a"/><rect x="2" y="3" width="6" height="1" fill="#555"/><rect x="2" y="5" width="6" height="1" fill="#555"/></svg>
<div class="t" style="left:328px;top:98px;font-size:8px;line-height:10px;color:#7c7c7c;">粘贴</div>
<div class="a" style="left:291px;top:110px;width:119px;height:1px;background:#474747;"></div>
<div class="a" style="left:297px;top:113px;width:8px;height:6px;background:#4a4a4a;border:1px solid #5f5f5f"></div>
<svg class="a" style="left:311px;top:112px;" width="10" height="7" viewBox="0 0 10 7"><rect x="1" y="1" width="8" height="6" fill="#8a8a8a"/></svg>
<div class="t" style="left:328px;top:112px;font-size:8px;line-height:10px;color:#6c6c6c;">粘贴</div>
<div class="a" style="left:291px;top:118px;width:119px;height:1px;background:#444;"></div>
<div class="a" style="left:410px;top:58px;width:8px;height:62px;background:#454545;"></div>
<svg class="a" style="left:411px;top:62px;" width="6" height="5" viewBox="0 0 6 5"><path d="M0 4L3 0L6 4Z" fill="#ccc"/></svg>
<div class="a" style="left:411px;top:86px;width:6px;height:10px;background:#8a8a8a;"></div>
<svg class="a" style="left:411px;top:112px;" width="6" height="5" viewBox="0 0 6 5"><path d="M0 0L6 0L3 4Z" fill="#ccc"/></svg>
<svg class="a" style="left:354px;top:120px;" width="14" height="9" viewBox="0 0 14 9"><path d="M1 8L4 4L6 6L9 1L12 5L13 8Z" fill="#dcdcdc"/><rect x="6" y="2" width="3" height="3" fill="#eee"/></svg>
<svg class="a" style="left:376px;top:120px;" width="11" height="9" viewBox="0 0 11 9"><rect x="0.5" y="2" width="10" height="6.5" rx="1" fill="#e6e6e6"/><rect x="3" y="0.5" width="4" height="2" fill="#e6e6e6"/><circle cx="5.5" cy="5.2" r="2" fill="#535353"/></svg>
<svg class="a" style="left:394px;top:120px;" width="9" height="9" viewBox="0 0 9 9"><rect x="0.5" y="1" width="8" height="1.2" fill="#b4b4b4"/><rect x="1.5" y="2.5" width="6" height="6.5" fill="#b4b4b4"/></svg>
<div class="a" style="left:291px;top:129px;width:128px;height:1px;background:#3c3c3c;"></div>
<div class="a" style="left:291px;top:130px;width:128px;height:4px;background:#515151;"></div>
<div class="a" style="left:348px;top:131px;width:15px;height:1px;background:#6e6e6e;"></div>
<div class="a" style="left:289px;top:48px;width:2px;height:88px;background:#1f1f1f;"></div>
<div class="a" style="left:289px;top:134px;width:131px;height:2px;background:#1f1f1f;"></div>
<div class="a" style="left:419px;top:48px;width:2px;height:356px;background:#2f2f2f;"></div>
<div class="a" style="left:421px;top:48px;width:22px;height:356px;background:#535353;"></div>
<div class="a" style="left:443px;top:48px;width:2px;height:356px;background:#2c2c2c;"></div>
<svg class="a" style="left:434px;top:42px;" width="8" height="5" viewBox="0 0 8 5"><path d="M3 0L0 2.5L3 5ZM5 0L8 2.5L5 5Z" fill="#b8b8b8"/></svg>
<svg class="a" style="left:589px;top:42px;" width="8" height="5" viewBox="0 0 8 5"><path d="M3 0L0 2.5L3 5ZM5 0L8 2.5L5 5Z" fill="#b8b8b8"/></svg>
<div class="a" style="left:427px;top:51px;width:10px;height:1px;background:#6b6b6b;"></div>
<div class="a" style="left:422px;top:54px;width:19px;height:15px;background:#3c3c3c;"></div>
<svg class="a" style="left:425px;top:55px;opacity:0.88" width="14" height="13" viewBox="0 0 14 13"><rect x="2" y="1" width="4" height="3" fill="#ddd"/><rect x="2" y="5" width="4" height="3" fill="#ddd"/><rect x="2" y="9" width="4" height="3" fill="#ddd"/><path d="M8 2Q12 3 11 8L9 11" stroke="#eee" fill="none" stroke-width="1.4"/></svg>
<div class="a" style="left:421px;top:71px;width:22px;height:1px;background:#3a3a3a;"></div>
<div class="a" style="left:421px;top:72px;width:22px;height:1px;background:#5c5c5c;"></div>
<div class="a" style="left:427px;top:75px;width:10px;height:1px;background:#6b6b6b;"></div>
<svg class="a" style="left:426px;top:80px;opacity:0.88" width="13" height="12" viewBox="0 0 13 12"><circle cx="6.5" cy="6" r="5.3" fill="#d8d8d8"/><circle cx="6.5" cy="6" r="3.8" fill="#777"/><path d="M3.5 9L9.5 3" stroke="#eee" stroke-width="1.6"/></svg>
<svg class="a" style="left:425px;top:97px;opacity:0.88" width="14" height="15" viewBox="0 0 14 15"><rect x="3" y="1" width="10" height="9" fill="#ddd"/><rect x="5" y="3" width="6" height="5" fill="#999"/><path d="M2 14L5 8L7 14" stroke="#eee" fill="none" stroke-width="1.2"/></svg>
<div class="a" style="left:421px;top:113px;width:22px;height:1px;background:#3a3a3a;"></div>
<div class="a" style="left:421px;top:114px;width:22px;height:1px;background:#5c5c5c;"></div>
<div class="a" style="left:427px;top:116px;width:10px;height:1px;background:#6b6b6b;"></div>
<svg class="a" style="left:425px;top:119px;opacity:0.88" width="14" height="13" viewBox="0 0 14 13"><path d="M4 1L6 5M10 1L8 5" stroke="#ddd" stroke-width="1.3"/><rect x="4" y="5" width="6" height="8" fill="#ddd"/></svg>
<svg class="a" style="left:425px;top:137px;opacity:0.88" width="14" height="12" viewBox="0 0 14 12"><rect x="1" y="3" width="12" height="1.4" fill="#ddd"/><rect x="1" y="8" width="12" height="1.4" fill="#ddd"/><rect x="3" y="1" width="3" height="5" fill="#ddd"/><rect x="8" y="6" width="3" height="5" fill="#ddd"/></svg>
<div class="a" style="left:421px;top:156px;width:22px;height:1px;background:#3a3a3a;"></div>
<div class="a" style="left:421px;top:157px;width:22px;height:1px;background:#5c5c5c;"></div>
<div class="a" style="left:427px;top:159px;width:10px;height:1px;background:#6b6b6b;"></div>
<svg class="a" style="left:425px;top:164px;opacity:0.88" width="14" height="12" viewBox="0 0 14 12"><rect x="6" y="0" width="2" height="5" fill="#ddd"/><rect x="2" y="5" width="10" height="4" fill="#ddd"/><rect x="1" y="10" width="12" height="2" fill="#bbb"/></svg>
<div class="a" style="left:421px;top:180px;width:22px;height:1px;background:#3a3a3a;"></div>
<div class="a" style="left:421px;top:181px;width:22px;height:1px;background:#5c5c5c;"></div>
<div class="a" style="left:427px;top:183px;width:10px;height:1px;background:#6b6b6b;"></div>
<div class="t" style="left:426px;top:190px;font-size:10px;line-height:12px;color:#e6e6e6;line-height:11px;letter-spacing:-0.5px">A|</div>
<svg class="a" style="left:426px;top:207px;opacity:0.88" width="12" height="11" viewBox="0 0 12 11"><rect x="2" y="1" width="9" height="9" fill="#ddd"/><rect x="5" y="3" width="2" height="7" fill="#777"/><rect x="8" y="3" width="1" height="7" fill="#777"/></svg>
<div class="a" style="left:421px;top:223px;width:22px;height:1px;background:#3a3a3a;"></div>
<div class="a" style="left:421px;top:224px;width:22px;height:1px;background:#5c5c5c;"></div>
<div class="a" style="left:427px;top:226px;width:10px;height:1px;background:#6b6b6b;"></div>
<svg class="a" style="left:425px;top:230px;opacity:0.88" width="14" height="13" viewBox="0 0 14 13"><rect x="1.5" y="1.5" width="11" height="10" fill="none" stroke="#e6e6e6" stroke-width="1.3"/><rect x="1" y="6" width="12" height="1.2" fill="#e6e6e6"/></svg>
<svg class="a" style="left:425px;top:247px;opacity:0.88" width="14" height="13" viewBox="0 0 14 13"><rect x="1.5" y="1.5" width="11" height="10" fill="none" stroke="#e6e6e6" stroke-width="1.3"/><rect x="3" y="4" width="7" height="1" fill="#e6e6e6"/><rect x="3" y="7" width="7" height="1" fill="#e6e6e6"/></svg>
<div class="a" style="left:421px;top:266px;width:22px;height:1px;background:#3a3a3a;"></div>
<div class="a" style="left:421px;top:267px;width:22px;height:1px;background:#5c5c5c;"></div>
<div class="a" style="left:427px;top:269px;width:10px;height:1px;background:#6b6b6b;"></div>
<svg class="a" style="left:425px;top:273px;opacity:0.88" width="14" height="13" viewBox="0 0 14 13"><path d="M2 2L12 12M12 2L2 12" stroke="#e6e6e6" stroke-width="1.8"/><circle cx="2.5" cy="2.5" r="2" fill="#e6e6e6"/></svg>
<div class="a" style="left:421px;top:289px;width:22px;height:1px;background:#3a3a3a;"></div>
<div class="a" style="left:421px;top:290px;width:22px;height:1px;background:#5c5c5c;"></div>
<div class="a" style="left:445px;top:48px;width:155px;height:356px;background:#535353;"></div>
<div class="a" style="left:445px;top:48px;width:155px;height:10px;background:#404040;"></div>
<div class="a" style="left:468px;top:49px;width:20px;height:9px;background:#474747;"></div>
<div class="a" style="left:447px;top:48px;width:20px;height:10px;background:#535353;"></div>
<div class="t" style="left:448px;top:49px;font-size:8px;line-height:10px;color:#e0e0e0;letter-spacing:-0.3px">颜色</div>
<div class="t" style="left:472px;top:49px;font-size:8px;line-height:10px;color:#a8a8a8;letter-spacing:-0.3px">色板</div>
<svg class="a" style="left:584px;top:50px;" width="13" height="7" viewBox="0 0 13 7"><rect x="0" y="3" width="4" height="1" fill="#bbb"/><rect x="6" y="1" width="6" height="1" fill="#bbb"/><rect x="6" y="3" width="6" height="1" fill="#bbb"/><rect x="6" y="5" width="6" height="1" fill="#bbb"/></svg>
<div class="a" style="left:454px;top:71px;width:12px;height:12px;background:#000;border:1px solid #d8d8d8"></div>
<div class="a" style="left:448px;top:64px;width:11px;height:12px;background:#61c8e2;border:1px solid #e8e8e8"></div>
<div class="t" style="left:471px;top:64px;font-size:8px;line-height:10px;color:#d0d0d0;">R</div>
<div class="a" style="left:479px;top:65px;width:77px;height:5px;background:#2e2e2e;"></div>
<div class="a" style="left:480px;top:66px;width:75px;height:3px;background:linear-gradient(to right,#00c8e2,#ffc8e2);"></div>
<svg class="a" style="left:506px;top:70px;" width="7" height="6" viewBox="0 0 7 6"><path d="M3.5 0L7 3L7 6L0 6L0 3Z" fill="#d8c4c4"/><rect x="0" y="4" width="7" height="2" fill="#9a8080"/></svg>
<div class="a" style="left:557px;top:63px;width:24px;height:13px;background:#353535;border:1px solid #4a4a4a"></div>
<div class="t" style="left:560px;top:65px;font-size:9px;line-height:11px;color:#eeeeee;letter-spacing:-0.2px">97</div>
<div class="t" style="left:471px;top:79px;font-size:8px;line-height:10px;color:#d0d0d0;">G</div>
<div class="a" style="left:479px;top:80px;width:77px;height:5px;background:#2e2e2e;"></div>
<div class="a" style="left:480px;top:81px;width:75px;height:3px;background:linear-gradient(to right,#6100e2,#61ffe2);"></div>
<svg class="a" style="left:536px;top:85px;" width="7" height="6" viewBox="0 0 7 6"><path d="M3.5 0L7 3L7 6L0 6L0 3Z" fill="#d8c4c4"/><rect x="0" y="4" width="7" height="2" fill="#9a8080"/></svg>
<div class="a" style="left:557px;top:78px;width:24px;height:13px;background:#353535;border:1px solid #4a4a4a"></div>
<div class="t" style="left:560px;top:80px;font-size:9px;line-height:11px;color:#eeeeee;letter-spacing:-0.2px">200</div>
<div class="t" style="left:471px;top:94px;font-size:8px;line-height:10px;color:#d0d0d0;">B</div>
<div class="a" style="left:479px;top:95px;width:77px;height:5px;background:#2e2e2e;"></div>
<div class="a" style="left:480px;top:96px;width:75px;height:3px;background:linear-gradient(to right,#61c800,#61c8ff);"></div>
<svg class="a" style="left:543px;top:100px;" width="7" height="6" viewBox="0 0 7 6"><path d="M3.5 0L7 3L7 6L0 6L0 3Z" fill="#d8c4c4"/><rect x="0" y="4" width="7" height="2" fill="#9a8080"/></svg>
<div class="a" style="left:557px;top:93px;width:24px;height:13px;background:#353535;border:1px solid #4a4a4a"></div>
<div class="t" style="left:560px;top:95px;font-size:9px;line-height:11px;color:#eeeeee;letter-spacing:-0.2px">226</div>
<div class="a" style="left:448px;top:112px;width:138px;height:10px;background:linear-gradient(to right,#e8302a 0%,#f0e040 18%,#38c048 36%,#30b8d8 52%,#2838b0 68%,#d040b0 84%,#e82838 100%)"></div>
<div class="a" style="left:448px;top:112px;width:138px;height:10px;background:linear-gradient(to bottom,rgba(255,255,255,0.85),rgba(255,255,255,0) 30%,rgba(0,0,0,0) 50%,rgba(0,0,0,0.75))"></div>
<div class="a" style="left:579px;top:112px;width:7px;height:5px;background:#f4f4f4;"></div>
<div class="a" style="left:579px;top:117px;width:7px;height:5px;background:#000;"></div>
<div class="a" style="left:447px;top:111px;width:140px;height:1px;background:#404040;"></div>
<div class="a" style="left:447px;top:122px;width:140px;height:1px;background:#404040;"></div>
<div class="a" style="left:445px;top:126px;width:155px;height:1px;background:#3a3a3a;"></div>
<div class="a" style="left:445px;top:127px;width:155px;height:11px;background:#404040;"></div>
<div class="a" style="left:447px;top:127px;width:20px;height:11px;background:#535353;"></div>
<div class="t" style="left:448px;top:128px;font-size:8px;line-height:10px;color:#d8d8d8;letter-spacing:-0.3px">属性</div>
<svg class="a" style="left:584px;top:130px;" width="13" height="7" viewBox="0 0 13 7"><rect x="0" y="3" width="4" height="1" fill="#bbb"/><rect x="6" y="1" width="6" height="1" fill="#bbb"/><rect x="6" y="3" width="6" height="1" fill="#bbb"/><rect x="6" y="5" width="6" height="1" fill="#bbb"/></svg>
<div class="t" style="left:448px;top:144px;font-size:8px;line-height:10px;color:#f0f0f0;letter-spacing:0px">无属性</div>
<div class="a" style="left:445px;top:159px;width:155px;height:1px;background:#5c5c5c;"></div>
<div class="a" style="left:588px;top:160px;width:1px;height:125px;background:#3c3c3c;"></div>
<div class="a" style="left:589px;top:160px;width:8px;height:125px;background:#444;"></div>
<div class="a" style="left:597px;top:160px;width:1px;height:125px;background:#3c3c3c;"></div>
<div class="a" style="left:445px;top:286px;width:155px;height:2px;background:#3a3a3a;"></div>
<div class="a" style="left:445px;top:288px;width:155px;height:11px;background:#404040;"></div>
<div class="a" style="left:463px;top:288px;width:20px;height:11px;background:#535353;"></div>
<div class="t" style="left:449px;top:289px;font-size:8px;line-height:10px;color:#a8a8a8;letter-spacing:-0.3px">3D</div>
<div class="t" style="left:465px;top:289px;font-size:8px;line-height:10px;color:#e0e0e0;letter-spacing:-0.5px">图层</div>
<div class="t" style="left:488px;top:289px;font-size:8px;line-height:10px;color:#a8a8a8;letter-spacing:-0.5px">通道</div>
<div class="t" style="left:512px;top:289px;font-size:8px;line-height:10px;color:#a8a8a8;letter-spacing:-0.5px">路径</div>
<svg class="a" style="left:584px;top:290px;" width="13" height="7" viewBox="0 0 13 7"><rect x="0" y="3" width="4" height="1" fill="#bbb"/><rect x="6" y="1" width="6" height="1" fill="#bbb"/><rect x="6" y="3" width="6" height="1" fill="#bbb"/><rect x="6" y="5" width="6" height="1" fill="#bbb"/></svg>
<div class="a" style="left:445px;top:299px;width:155px;height:1px;background:#444;"></div>
<div class="a" style="left:448px;top:300px;width:43px;height:13px;background:#5a5a5a;border:1px solid #404040"></div>
<svg class="a" style="left:451px;top:303px;" width="8" height="8" viewBox="0 0 8 8"><circle cx="3.2" cy="3.2" r="2.4" fill="none" stroke="#e0e0e0" stroke-width="1.1"/><path d="M5 5L7.5 7.5" stroke="#e0e0e0" stroke-width="1.3"/></svg>
<div class="t" style="left:461px;top:301px;font-size:8px;line-height:10px;color:#e0e0e0;letter-spacing:-0.3px">类型</div>
<svg class="a" style="left:485px;top:303px;" width="5" height="8" viewBox="0 0 5 8"><path d="M0 3L2.5 0L5 3ZM0 5L5 5L2.5 8Z" fill="#ccc"/></svg>
<svg class="a" style="left:503px;top:302px;" width="10" height="10" viewBox="0 0 10 10"><rect x="1" y="1" width="8" height="8" fill="none" stroke="#ddd" stroke-width="1.2"/><rect x="3" y="4" width="4" height="3" fill="#ddd"/></svg>
<svg class="a" style="left:518px;top:302px;" width="9" height="9" viewBox="0 0 9 9"><circle cx="4.5" cy="4.5" r="4" fill="#ddd"/><path d="M2.5 2.5L7 4.5L2.5 6.5Z" fill="#555"/></svg>
<div class="t" style="left:533px;top:301px;font-size:10px;line-height:12px;color:#e6e6e6;font-weight:bold;line-height:11px;font-family:'Liberation Serif',serif">T</div>
<svg class="a" style="left:547px;top:302px;" width="8" height="10" viewBox="0 0 8 10"><path d="M1 1L7 1M1 9L7 9M4 1L4 9" stroke="#ddd" stroke-width="1.2"/><rect x="2" y="3" width="4" height="4" fill="none" stroke="#ddd"/></svg>
<svg class="a" style="left:561px;top:302px;" width="9" height="10" viewBox="0 0 9 10"><rect x="1" y="4" width="7" height="6" fill="#ddd"/><path d="M4 4L4 1L7 1" stroke="#ddd" fill="none" stroke-width="1.2"/></svg>
<div class="a" style="left:583px;top:302px;width:5px;height:11px;background:#3a3a3a;border-radius:2px"></div>
<div class="a" style="left:584px;top:303px;width:3px;height:4px;background:#8a8a8a;border-radius:1px"></div>
<div class="a" style="left:445px;top:315px;width:155px;height:1px;background:#4a4a4a;"></div>
<div class="a" style="left:448px;top:318px;width:66px;height:12px;background:#5a5a5a;border:1px solid #404040"></div>
<div class="t" style="left:452px;top:319px;font-size:8px;line-height:10px;color:#e0e0e0;letter-spacing:-0.3px">正常</div>
<svg class="a" style="left:506px;top:320px;" width="5" height="8" viewBox="0 0 5 8"><path d="M0 3L2.5 0L5 3ZM0 5L5 5L2.5 8Z" fill="#ccc"/></svg>
<div class="t" style="left:519px;top:319px;font-size:8px;line-height:10px;color:#e0e0e0;letter-spacing:-0.6px">不透明度:</div>
<div class="a" style="left:554px;top:319px;width:22px;height:11px;background:#353535;"></div>
<div class="t" style="left:555px;top:320px;font-size:8px;line-height:10px;color:#f0f0f0;letter-spacing:-0.6px">100%</div>
<div class="a" style="left:577px;top:319px;width:10px;height:11px;background:#666;border:1px solid #444"></div>
<svg class="a" style="left:580px;top:323px;" width="4" height="3" viewBox="0 0 4 3"><path d="M0 0L4 0L2 3Z" fill="#eee"/></svg>
<div class="a" style="left:445px;top:333px;width:155px;height:1px;background:#4a4a4a;"></div>
<div class="t" style="left:448px;top:336px;font-size:8px;line-height:10px;color:#e0e0e0;letter-spacing:-0.5px">锁定:</div>
<div class="a" style="left:472px;top:337px;width:7px;height:8px;background:repeating-conic-gradient(#e6e6e6 0 25%,#666 0 50%) 0 0/4px 4px;border:1px solid #ddd"></div>
<svg class="a" style="left:482px;top:336px;" width="12" height="11" viewBox="0 0 12 11"><path d="M11 1L5 7" stroke="#ddd" stroke-width="1.3"/><path d="M1 10Q2 7 5 7Q5 10 1 10Z" fill="#ddd"/></svg>
<svg class="a" style="left:497px;top:336px;" width="10" height="10" viewBox="0 0 10 10"><path d="M5 0L5 10M0 5L10 5" stroke="#ddd" stroke-width="1.1"/></svg>
<svg class="a" style="left:511px;top:336px;" width="8" height="10" viewBox="0 0 8 10"><rect x="0.5" y="4" width="7" height="6" fill="#ddd"/><path d="M2 4L2 2.5A2 2 0 0 1 6 2.5L6 4" stroke="#ddd" fill="none"/></svg>
<div class="t" style="left:534px;top:336px;font-size:8px;line-height:10px;color:#e0e0e0;letter-spacing:-0.5px">填充:</div>
<div class="a" style="left:554px;top:336px;width:22px;height:11px;background:#353535;"></div>
<div class="t" style="left:555px;top:337px;font-size:8px;line-height:10px;color:#f0f0f0;letter-spacing:-0.6px">100%</div>
<div class="a" style="left:577px;top:336px;width:10px;height:11px;background:#666;border:1px solid #444"></div>
<svg class="a" style="left:580px;top:340px;" width="4" height="3" viewBox="0 0 4 3"><path d="M0 0L4 0L2 3Z" fill="#eee"/></svg>
<div class="a" style="left:445px;top:349px;width:155px;height:1px;background:#404040;"></div>
<div class="a" style="left:445px;top:350px;width:143px;height:1px;background:#3a3a3a;"></div>
<div class="a" style="left:464px;top:351px;width:124px;height:19px;background:#6b7c93;"></div>
<svg class="a" style="left:449px;top:357px;" width="10" height="7" viewBox="0 0 10 7"><path d="M0.5 3.5Q5 -1 9.5 3.5Q5 8 0.5 3.5Z" fill="#e0e0e0"/><circle cx="5" cy="3.5" r="1.6" fill="#535353"/></svg>
<div class="a" style="left:465px;top:352px;width:21px;height:17px;border:1px solid #f4f4f4;background:repeating-conic-gradient(#fff 0 25%,#d4d4d4 0 50%) 0 0/6px 6px"></div>
<div class="t" style="left:491px;top:356px;font-size:8px;line-height:10px;color:#eef0f4;letter-spacing:-0.4px">图层 2</div>
<div class="a" style="left:445px;top:370px;width:143px;height:1px;background:#3e3e3e;"></div>
<svg class="a" style="left:449px;top:377px;" width="10" height="7" viewBox="0 0 10 7"><path d="M0.5 3.5Q5 -1 9.5 3.5Q5 8 0.5 3.5Z" fill="#e0e0e0"/><circle cx="5" cy="3.5" r="1.6" fill="#535353"/></svg>
<div class="a" style="left:465px;top:372px;width:20px;height:16px;border:1px solid #222;background:repeating-conic-gradient(#fff 0 25%,#d4d4d4 0 50%) 0 0/6px 6px"></div>
<svg class="a" style="left:466px;top:373px" width="18" height="14"><path d="M0 0L18 0L18 5Q13 9 8 9Q3 9 0 7Z" fill="#61c8e2"/></svg>
<div class="t" style="left:491px;top:376px;font-size:8px;line-height:10px;color:#e0e0e0;letter-spacing:-0.4px">图层 1</div>
<div class="a" style="left:445px;top:389px;width:143px;height:1px;background:#3e3e3e;"></div>
<svg class="a" style="left:449px;top:396px;" width="10" height="7" viewBox="0 0 10 7"><path d="M0.5 3.5Q5 -1 9.5 3.5Q5 8 0.5 3.5Z" fill="#e0e0e0"/><circle cx="5" cy="3.5" r="1.6" fill="#535353"/></svg>
<div class="a" style="left:465px;top:391px;width:20px;height:16px;border:1px solid #222;background:repeating-conic-gradient(#fff 0 25%,#d4d4d4 0 50%) 0 0/6px 6px"></div>
<div class="a" style="left:481px;top:400px;width:3px;height:4px;background:#b09060;"></div>
<div class="t" style="left:491px;top:395px;font-size:8px;line-height:10px;color:#e0e0e0;letter-spacing:-0.4px">背景 拷贝</div>
<div class="a" style="left:588px;top:350px;width:12px;height:54px;background:#444;"></div>
<div class="a" style="left:588px;top:350px;width:1px;height:54px;background:#333;"></div>
<div class="a" style="left:591px;top:350px;width:1px;height:54px;background:#383838;"></div>
<div class="a" style="left:597px;top:350px;width:3px;height:54px;background:#4c4c4c;"></div>
</div></body></html>
